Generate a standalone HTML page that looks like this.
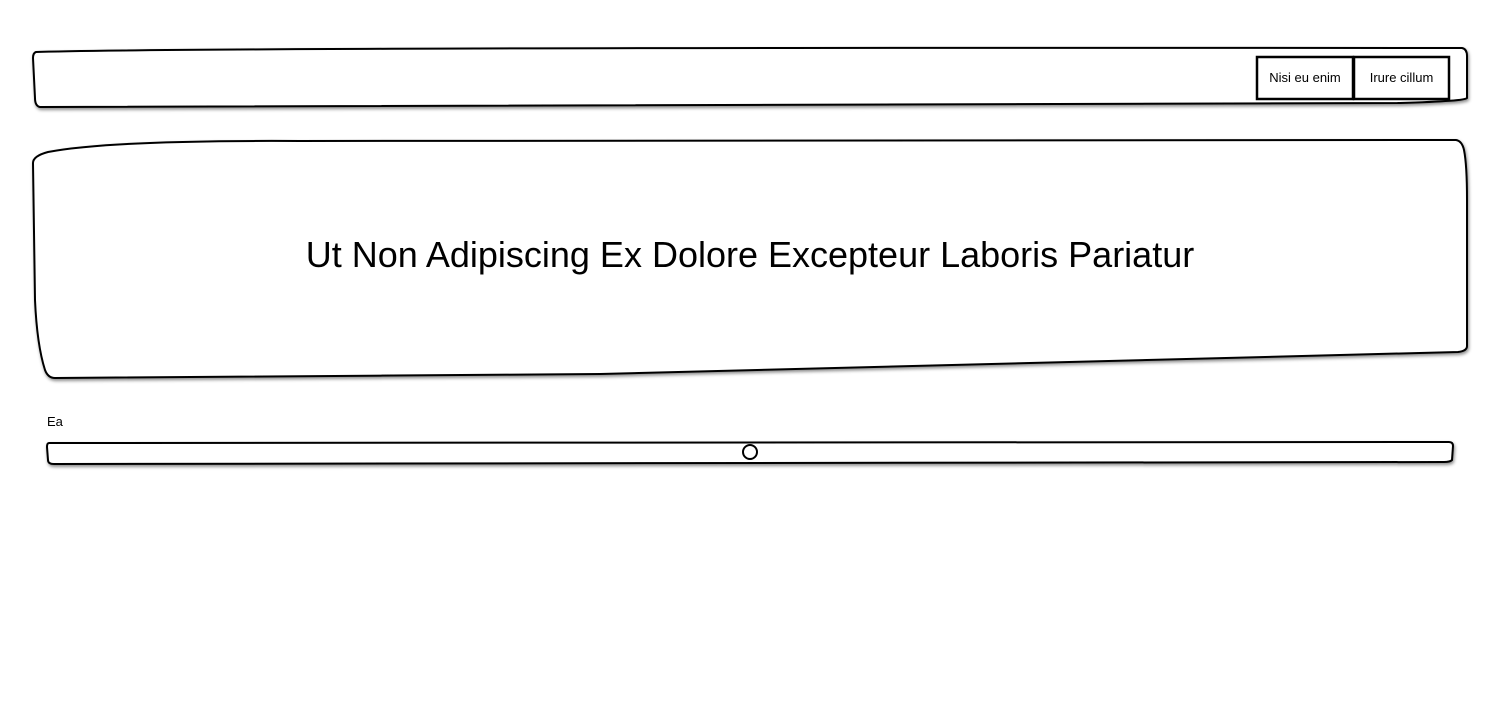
<!DOCTYPE html>
<html><head><meta charset="utf-8"><style>
html,body{margin:0;padding:0;background:#fff;width:1500px;height:720px;overflow:hidden;font-family:"Liberation Sans",sans-serif;color:#000}
.abs{position:absolute}
</style></head><body>
<svg class="abs" style="left:0;top:0" width="1500" height="720">
<defs><filter id="s" x="-5%" y="-5%" width="110%" height="120%"><feDropShadow dx="1" dy="2" stdDeviation="1.5" flood-color="#000" flood-opacity="0.45"/></filter></defs>
<g fill="#fff" stroke="#000" stroke-width="2" filter="url(#s)">
<path d="M36,52 Q200,47 1462,48 Q1467,49 1467,56 L1467,98 Q1466,101 1400,103 L40,107 Q35,106 35,98 L33,58 Q33,53 36,52 Z"/>
<path d="M33,163 Q33,156 48,152 Q110,140 300,141 L1456,140 Q1462,141 1464,150 Q1467,165 1467,200 L1467,346 Q1467,351 1458,352 L600,374 L55,378 Q48,378 45,370 Q37,345 35,300 Z"/>
<path d="M49,443 L1449,442 Q1453,442 1453,446 L1452,460 Q1450,462 1444,462 L54,464 Q48,464 48,460 L47,447 Q47,443 49,443 Z"/>
<circle cx="750" cy="452" r="7"/>
</g>
<g fill="#fff" stroke="#000" stroke-width="2.5">
<rect x="1257" y="57" width="96" height="42"/>
<rect x="1354" y="57" width="95" height="42"/>
</g>
</svg>
<div class="abs" style="left:1257px;top:57px;width:96px;height:42px;line-height:42px;text-align:center;font-size:13px">Nisi eu enim</div>
<div class="abs" style="left:1354px;top:57px;width:95px;height:42px;line-height:42px;text-align:center;font-size:13px">Irure cillum</div>
<div class="abs" style="left:33px;top:230px;width:1434px;text-align:center;font-size:36px;line-height:50px">Ut Non Adipiscing Ex Dolore Excepteur Laboris Pariatur</div>
<div class="abs" style="left:47px;top:414px;font-size:13px">Ea</div>
</body></html>
